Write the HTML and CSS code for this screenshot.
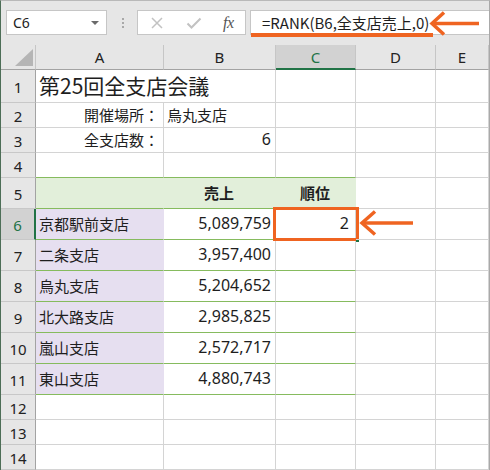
FILE: index.html
```html
<!DOCTYPE html>
<html lang="ja">
<head>
<meta charset="utf-8">
<title>RANK</title>
<link rel="stylesheet" href="styles.css">
</head>
<body>
<div class="app">
  <div class="fbar">
    <div class="namebox"><span class="nb-text">C6</span><span class="nb-arrow"></span></div>
    <div class="grip"><i></i><i></i><i></i></div>
    <div class="btns">
      <svg class="ic-x" width="14" height="14" viewBox="0 0 14 14"><path d="M2 2L12 12M12 2L2 12" stroke="#c2c2c2" stroke-width="1.5" fill="none"/></svg>
      <svg class="ic-ok" width="16" height="14" viewBox="0 0 16 14"><path d="M1.5 7.5L5.5 11.5L14.5 2.5" stroke="#c2c2c2" stroke-width="2" fill="none"/></svg>
      <span class="fx">fx</span>
    </div>
    <div class="finput">
      <span class="ftext">=RANK(B6,全支店売上,0)</span>
      <span class="uline"></span>
      <svg class="farrow" width="52" height="27" viewBox="0 0 52 27"><path d="M3 13.5H50" stroke="#ef6421" stroke-width="3.5" fill="none"/><path d="M15 2.5L3 13.5L15 24.5" stroke="#ef6421" stroke-width="3.5" fill="none"/></svg>
    </div>
  </div>

  <div class="sheet">
    <div class="corner"><svg width="19" height="18" viewBox="0 0 19 18"><path d="M18 0V17H0Z" fill="#b5b5b5"/></svg></div>
    <div class="ch">A</div>
    <div class="ch">B</div>
    <div class="ch sel">C</div>
    <div class="ch">D</div>
    <div class="ch">E</div>

    <div class="rh">1</div>
    <div class="c title span2">第25回全支店会議</div>
    <div class="c"></div><div class="c"></div><div class="c"></div>

    <div class="rh">2</div>
    <div class="c r">開催場所：</div>
    <div class="c">烏丸支店</div>
    <div class="c"></div><div class="c"></div><div class="c"></div>

    <div class="rh">3</div>
    <div class="c r">全支店数：</div>
    <div class="c r num">6</div>
    <div class="c"></div><div class="c"></div><div class="c"></div>

    <div class="rh">4</div>
    <div class="c gb"></div><div class="c gb"></div><div class="c gb"></div>
    <div class="c"></div><div class="c"></div>

    <div class="rh">5</div>
    <div class="c hdr"></div>
    <div class="c hdr ctr">売上</div>
    <div class="c hdr ctr">順位</div>
    <div class="c"></div><div class="c"></div>

    <div class="rh selr">6</div>
    <div class="c lav">京都駅前支店</div>
    <div class="c r num gb">5,089,759</div>
    <div class="c r num gb cur">2<span class="hl"></span><span class="handle"></span></div>
    <div class="c over"><svg class="rarrow" width="54" height="28" viewBox="0 0 54 28"><path d="M3 14H54" stroke="#ef6421" stroke-width="3.5" fill="none"/><path d="M16 2.5L3 14L16 25.5" stroke="#ef6421" stroke-width="3.5" fill="none"/></svg></div>
    <div class="c"></div>

    <div class="rh">7</div>
    <div class="c lav">二条支店</div>
    <div class="c r num gb">3,957,400</div>
    <div class="c gb"></div><div class="c"></div><div class="c"></div>

    <div class="rh">8</div>
    <div class="c lav">烏丸支店</div>
    <div class="c r num gb">5,204,652</div>
    <div class="c gb"></div><div class="c"></div><div class="c"></div>

    <div class="rh">9</div>
    <div class="c lav">北大路支店</div>
    <div class="c r num gb">2,985,825</div>
    <div class="c gb"></div><div class="c"></div><div class="c"></div>

    <div class="rh">10</div>
    <div class="c lav">嵐山支店</div>
    <div class="c r num gb">2,572,717</div>
    <div class="c gb"></div><div class="c"></div><div class="c"></div>

    <div class="rh">11</div>
    <div class="c lav">東山支店</div>
    <div class="c r num gb">4,880,743</div>
    <div class="c gb"></div><div class="c"></div><div class="c"></div>

    <div class="rh">12</div>
    <div class="c"></div><div class="c"></div><div class="c"></div><div class="c"></div><div class="c"></div>
    <div class="rh">13</div>
    <div class="c"></div><div class="c"></div><div class="c"></div><div class="c"></div><div class="c"></div>
    <div class="rh">14</div>
    <div class="c"></div><div class="c"></div><div class="c"></div><div class="c"></div><div class="c"></div>
  </div>
</div>
</body>
</html>
```

FILE: styles.css
```css
* { box-sizing: border-box; }
html, body { margin: 0; padding: 0; background: #ffffff; }
body { width: 490px; height: 470px; overflow: hidden; }

.app {
  width: 490px;
  height: 470px;
  border-top: 1px solid #b9b9b9;
  border-left: 1px solid #4d6e57;
  border-right: 1px solid #a9a9a9;
  background: #e6e6e6;
  font-family: "Noto Sans CJK JP", "Noto Sans", sans-serif;
  color: #1e1e1e;
  overflow: hidden;
}

/* formula bar */
.fbar {
  height: 44px;
  display: flex;
  align-items: flex-start;
  padding: 9px 0 0 5px;
  background: #e6e6e6;
}
.namebox {
  width: 101px;
  height: 25px;
  background: #fff;
  border: 1px solid #c6c6c6;
  display: flex;
  align-items: center;
  justify-content: space-between;
  padding: 0 7px 0 6px;
  font-family: "Noto Sans", sans-serif;
  font-size: 14px;
  color: #222;
}
.nb-arrow {
  width: 0; height: 0;
  border-left: 4px solid transparent;
  border-right: 4px solid transparent;
  border-top: 4px solid #6a6a6a;
  margin-top: 1px;
}
.grip {
  margin-left: 15px;
  height: 25px;
  display: flex;
  flex-direction: column;
  justify-content: center;
  gap: 2px;
}
.grip i { display: block; width: 2px; height: 2px; background: #a8a8a8; }
.btns {
  margin-left: 13px;
  width: 109px;
  height: 25px;
  background: #fff;
  border: 1px solid #c6c6c6;
  display: flex;
  align-items: center;
  padding-left: 12px;
}
.ic-ok { margin-left: 22px; }
.fx {
  margin-left: 21px;
  font-family: "Liberation Serif", serif;
  font-style: italic;
  font-size: 16px;
  color: #555;
  letter-spacing: -0.5px;
}
.finput {
  position: relative;
  flex: 1;
  margin-left: 4px;
  height: 25px;
  background: #fff;
  border: 1px solid #c6c6c6;
  border-right: none;
  display: flex;
  align-items: center;
  padding-left: 11px;
  padding-bottom: 1px;
  font-size: 15px;
  color: #1e1e1e;
  white-space: nowrap;
}
.uline {
  position: absolute;
  left: 0;
  top: 22px;
  width: 182px;
  height: 4px;
  background: #ef6421;
}
.farrow { position: absolute; left: 178px; top: -1px; }

/* grid */
.sheet {
  display: grid;
  grid-template-columns: 35px 128px 112px 80px 80px 1fr;
  grid-template-rows: 25px 33px 25px 25px 25px repeat(7, 31px) 25px 25px 25px;
  background: #fff;
}
.corner {
  background: #e6e6e6;
  border-right: 1px solid #c6c6c6;
  border-bottom: 1px solid #a3a3a3;
  display: flex;
  align-items: flex-end;
  justify-content: flex-end;
  padding: 0 1px 2px 0;
}
.ch {
  background: #e6e6e6;
  border-right: 1px solid #c6c6c6;
  border-bottom: 1px solid #a3a3a3;
  display: flex;
  align-items: center;
  justify-content: center;
  font-family: "Noto Sans", sans-serif;
  font-size: 15px;
  color: #222;
}
.ch.sel {
  background: #d2d2d2;
  color: #217346;
  border-bottom: 2px solid #217346;
}
.rh {
  background: #e6e6e6;
  border-right: 1px solid #a3a3a3;
  border-bottom: 1px solid #c8c8c8;
  display: flex;
  align-items: center;
  justify-content: center;
  padding-top: 2px;
  font-family: "Noto Sans", sans-serif;
  font-size: 15px;
  color: #222;
}
.rh.selr {
  background: #d2d2d2;
  color: #217346;
  border-right: 2px solid #217346;
}

.c {
  border-right: 1px solid #d4d4d4;
  border-bottom: 1px solid #d4d4d4;
  display: flex;
  align-items: center;
  padding: 0 4px 2px 3px;
  font-size: 15px;
  white-space: nowrap;
}
.span2 { grid-column: span 2; }
.title { font-size: 21px; padding-left: 3px; padding-bottom: 2px; }
.r { justify-content: flex-end; }
.ctr { justify-content: center; font-weight: bold; }
.num { font-family: "Noto Sans", sans-serif; font-size: 16px; }
.gb { border-bottom-color: #86bb5e; }
.hdr {
  background: #e2efda;
  border-right-color: #e2efda;
  border-bottom-color: #86bb5e;
}
.lav {
  background: #e6dff0;
  border-right-color: #e6dff0;
  border-bottom-color: #86bb5e;
}
.cur { position: relative; padding-right: 6px; }
.hl {
  position: absolute;
  left: -3px;
  top: -2px;
  right: -4px;
  bottom: -2px;
  border: 3px solid #ef6421;
}
.handle {
  position: absolute;
  right: -4px;
  bottom: -3px;
  width: 3px;
  height: 3px;
  background: #217346;
}
.over { position: relative; }
.rarrow { position: absolute; left: 3px; top: 0; }
```
